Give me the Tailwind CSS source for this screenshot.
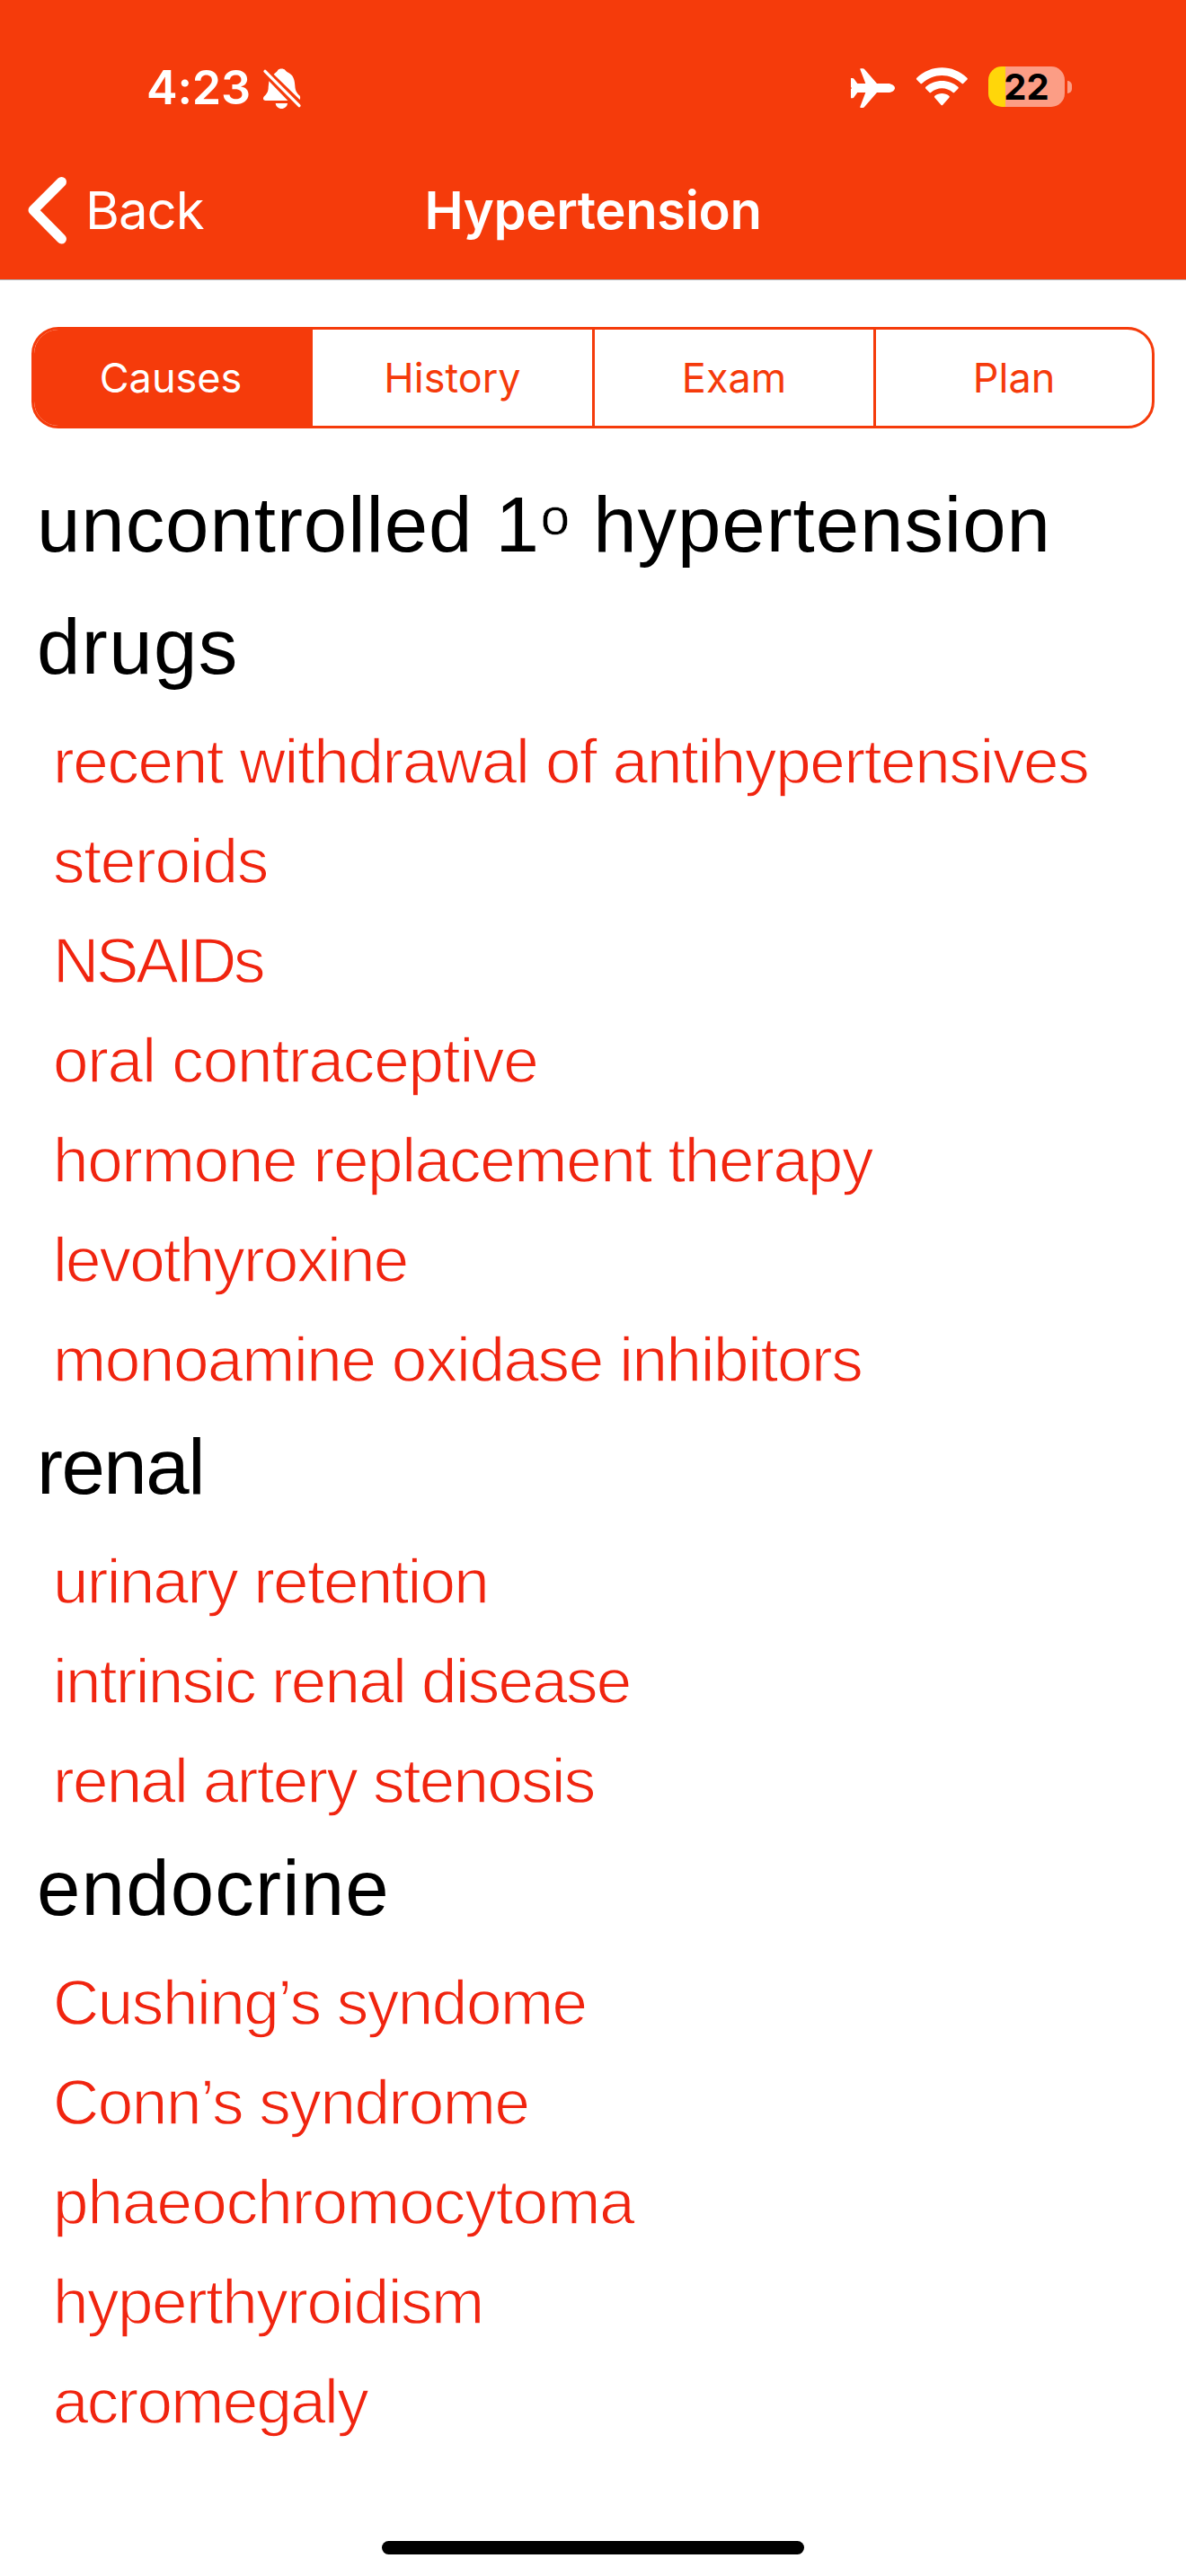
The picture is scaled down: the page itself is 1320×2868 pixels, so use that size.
<!DOCTYPE html>
<html lang="en">
<head>
<meta charset="utf-8">
<title>Hypertension</title>
<script src="https://cdn.jsdelivr.net/npm/@tailwindcss/browser@4"></script>
</head>
<body class="bg-white">
<div class="flex h-[2868px] w-[1320px] flex-col overflow-hidden bg-white font-['Inter',sans-serif]">
  <header class="flex h-[312px] shrink-0 flex-col border-b border-[#a9b3b8] bg-[#f53b0b] text-white">
    <div class="flex h-[196px] shrink-0 items-center pl-[163px]">
      <span class="w-[129px] text-[52px] leading-none font-semibold tracking-[-0.2px] whitespace-nowrap">4:23</span>
      <svg class="h-[47px] w-[44px]" viewBox="456 74 132 141" fill="white">
        <path d="M494 97 C501 91 505 88 508 83 C512 77 528 77 532 83 C535 88 540 90 547 94 C561 103 564 118 565 136 C566 153 572 160 580 168 C583 172 583 177 581 182 Z"/>
        <path d="M478 120 L541 185 L467 185 C458 185 457 176 462 171 C471 162 476 155 476 140 Z"/>
        <path d="M500 194 H540 C539 205 530 212 520 212 C510 212 501 205 500 194 Z"/>
        <path d="M465 87 L579 202" stroke="white" stroke-width="10" stroke-linecap="round"/>
      </svg>
      <svg class="ml-[610px] h-[46px] w-[51px]" viewBox="78 75 153 138" fill="white">
        <path d="M81 111 H87 Q90 111 92 114 L103 129 H130 L112 82 Q111 79 114 79 H121 Q124 79 127 82 L168 129 H205 C216 129 228 136 228 144 C228 153 216 159 205 159 H168 L127 206 Q124 210 121 210 H114 Q111 210 112 206 L130 159 H103 L92 174 Q90 178 87 178 H81 V148 L84 144 L81 141 Z"/>
      </svg>
      <svg class="mb-1 ml-[22px] h-[44px] w-[59px]" viewBox="297 72 177 132" fill="white">
        <path d="M301 116 Q298 113 301 110 C348 64 422 64 469 110 Q472 113 469 116 L457 128 Q454 131 451 128 C413 93 357 93 319 128 Q316 131 313 128 Z"/>
        <path d="M331 146 Q328 143 331 140 C361 113 409 113 439 140 Q442 143 439 146 L427 158 Q424 161 421 158 C400 140 370 140 349 158 Q346 161 343 158 Z"/>
        <path d="M361 176 Q358 173 361 170 C375 159 395 159 409 170 Q412 173 409 176 L388 200 Q385 203 382 200 Z"/>
      </svg>
      <div class="mb-[3px] ml-[22px] flex items-center">
        <div class="flex h-[45px] w-[85px] items-center justify-center rounded-[15px] bg-linear-to-r from-[#ffd60a] from-[19px] to-[#fc9d85] to-[19px] text-[40px] leading-none font-bold text-black">22</div>
        <div class="ml-[3px] h-[14px] w-[5px] rounded-r-full bg-[#fc9d85]"></div>
      </div>
    </div>
    <nav class="grid h-[74px] grid-cols-3 items-center">
      <div class="flex items-center pl-[30px]">
        <svg class="h-[76px] w-[46px]" viewBox="0 0 46 76" fill="none" stroke="white" stroke-width="11" stroke-linecap="round" stroke-linejoin="round"><path d="M38.500 6.500 L7 38 L38.500 70"/></svg>
        <span class="ml-[19px] text-[58px] leading-none tracking-[-1px]">Back</span>
      </div>
      <h1 class="text-center text-[58px] leading-none font-semibold tracking-[-0.400px] whitespace-nowrap">Hypertension</h1>
    </nav>
  </header>

  <div class="mx-[35px] mt-[52px] grid h-[113px] shrink-0 grid-cols-[310px_314px_313px_307px] overflow-hidden rounded-[30px] border-3 border-[#f53b0b] text-[45px] leading-none text-[#f53b0b]">
    <div class="flex items-center justify-center bg-[#f53b0b] pr-1.5 text-white">Causes</div>
    <div class="flex items-center justify-center border-r-3 border-[#f53b0b]">History</div>
    <div class="flex items-center justify-center border-r-3 border-[#f53b0b]">Exam</div>
    <div class="flex items-center justify-center">Plan</div>
  </div>

  <main class="mt-[42px] flex grow flex-col font-['Liberation_Sans',sans-serif] whitespace-nowrap">
    <h2 class="h-[136px] pl-[41px] text-[87px] leading-[130px] tracking-[0.950px] text-black">uncontrolled 1<span class="mx-px align-[19px] text-[58px] leading-none tracking-normal [-webkit-text-stroke:0.500px_white]">o</span> hypertension</h2>
    <h2 class="h-[136px] pl-[41px] text-[87px] leading-[130px] tracking-[1.400px] text-black">drugs</h2>
    <ul class="-mb-px pt-px pl-[59px] text-[71px] leading-[111px] text-[#f0240f] [-webkit-text-stroke:1.300px_white]">
      <li class="tracking-[-1.350px]">recent withdrawal of antihypertensives</li>
      <li class="tracking-[-1.200px]">steroids</li>
      <li class="tracking-[-3.200px]">NSAIDs</li>
      <li class="tracking-[-1.150px]">oral contraceptive</li>
      <li class="tracking-[-1.300px]">hormone replacement therapy</li>
      <li class="tracking-[-1.850px]">levothyroxine</li>
      <li class="tracking-[-1.390px]">monoamine oxidase inhibitors</li>
    </ul>
    <h2 class="h-[136px] pl-[41px] text-[87px] leading-[130px] tracking-[-1.500px] text-black">renal</h2>
    <ul class="-mb-px pt-px pl-[59px] text-[71px] leading-[111px] text-[#f0240f] [-webkit-text-stroke:1.300px_white]">
      <li class="tracking-[-1.700px]">urinary retention</li>
      <li class="tracking-[-1.750px]">intrinsic renal disease</li>
      <li class="tracking-[-1.750px]">renal artery stenosis</li>
    </ul>
    <h2 class="h-[136px] pl-[41px] text-[87px] leading-[130px] tracking-[1.200px] text-black">endocrine</h2>
    <ul class="-mb-px pt-px pl-[59px] text-[71px] leading-[111px] text-[#f0240f] [-webkit-text-stroke:1.300px_white]">
      <li class="tracking-[-1.450px]">Cushing’s syndome</li>
      <li class="tracking-[-1.450px]">Conn’s syndrome</li>
      <li class="tracking-[-0.950px]">phaeochromocytoma</li>
      <li class="tracking-[-1.500px]">hyperthyroidism</li>
      <li class="tracking-[-1.700px]">acromegaly</li>
    </ul>
  </main>
  <div class="mx-auto mb-6 h-[15px] w-[470px] shrink-0 rounded-full bg-black"></div>
</div>
</body>
</html>
